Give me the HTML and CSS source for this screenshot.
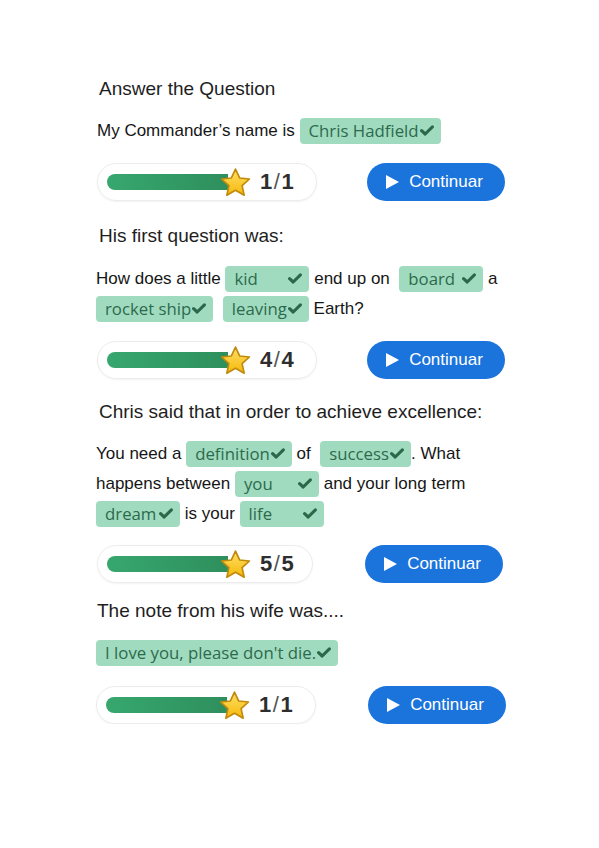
FILE: index.html
```html
<!DOCTYPE html>
<html>
<head>
<meta charset="utf-8">
<link rel="stylesheet" href="styles.css">
</head>
<body>
<svg width="0" height="0" class="defs">
  <defs>
    <symbol id="chk" viewBox="0 0 14 11"><path d="M1.6 5.6 L5.2 9 L12.4 1.8" fill="none" stroke="#2a6848" stroke-width="3.1" stroke-linecap="round" stroke-linejoin="round"/></symbol>
    <linearGradient id="sg" x1="0" y1="0" x2="0" y2="1"><stop offset="0" stop-color="#ffe066"/><stop offset="1" stop-color="#f6b80a"/></linearGradient>
    <symbol id="star" viewBox="0 0 32 30"><polygon points="16,2 20,10.6 29.5,11.6 22.4,18 24.4,27.4 16,22.6 7.6,27.4 9.6,18 2.5,11.6 12,10.6" fill="url(#sg)" stroke="#c08a0c" stroke-width="1.6" stroke-linejoin="round"/></symbol>
    <symbol id="play" viewBox="0 0 15 16"><polygon points="1,1 14,8 1,15" fill="#fff"/></symbol>
  </defs>
</svg>
<main class="page">
  <h2 class="title t1">Answer the Question</h2>
  <p class="para p1">My Commander’s name is <span class="chip">Chris Hadfield<svg class="ck"><use href="#chk"/></svg></span></p>
  <div class="row r1">
    <div class="pill"><div class="bar"></div><svg class="star"><use href="#star"/></svg><span class="frac">1<span class="sl">/</span>1</span></div>
    <button class="btn"><svg class="play"><use href="#play"/></svg>Continuar</button>
  </div>

  <h2 class="title t2">His first question was:</h2>
  <p class="para p2">How does a little <span class="chip mw">kid<svg class="ck"><use href="#chk"/></svg></span> end up on &nbsp;<span class="chip mw">board<svg class="ck"><use href="#chk"/></svg></span> a<br><span class="chip">rocket ship<svg class="ck"><use href="#chk"/></svg></span> &nbsp;<span class="chip">leaving<svg class="ck"><use href="#chk"/></svg></span> Earth?</p>
  <div class="row r2">
    <div class="pill"><div class="bar"></div><svg class="star"><use href="#star"/></svg><span class="frac">4<span class="sl">/</span>4</span></div>
    <button class="btn"><svg class="play"><use href="#play"/></svg>Continuar</button>
  </div>

  <h2 class="title t3">Chris said that in order to achieve excellence:</h2>
  <p class="para p3">You need a <span class="chip">definition<svg class="ck"><use href="#chk"/></svg></span> of &nbsp;<span class="chip">success<svg class="ck"><use href="#chk"/></svg></span>. What<br>happens between <span class="chip mw">you<svg class="ck"><use href="#chk"/></svg></span> and your long term<br><span class="chip mw">dream<svg class="ck"><use href="#chk"/></svg></span> is your <span class="chip mw">life<svg class="ck"><use href="#chk"/></svg></span></p>
  <div class="row r3">
    <div class="pill"><div class="bar"></div><svg class="star"><use href="#star"/></svg><span class="frac">5<span class="sl">/</span>5</span></div>
    <button class="btn"><svg class="play"><use href="#play"/></svg>Continuar</button>
  </div>

  <h2 class="title t4">The note from his wife was....</h2>
  <p class="para p4"><span class="chip">I love you, please don't die.<svg class="ck"><use href="#chk"/></svg></span></p>
  <div class="row r4">
    <div class="pill"><div class="bar"></div><svg class="star"><use href="#star"/></svg><span class="frac">1<span class="sl">/</span>1</span></div>
    <button class="btn"><svg class="play"><use href="#play"/></svg>Continuar</button>
  </div>
</main>
</body>
</html>
```
FILE: styles.css
```css
html, body {
  margin: 0;
  padding: 0;
  background: #fff;
}
.defs {
  position: absolute;
  width: 0;
  height: 0;
}
.page {
  padding: 77px 0 0 96px;
  width: 412px;
  font-family: "Liberation Sans", Arial, sans-serif;
  color: #161616;
}
.title {
  margin: 0;
  padding-left: 3px;
  font-size: 19px;
  line-height: 24px;
  font-weight: normal;
  color: #1e1e1e;
}
.t2 { margin-top: 23px; }
.t3 { margin-top: 21px; }
.t4 { margin-top: 16px; padding-left: 1px; }
.para {
  margin: 15px 0 0;
  font-size: 17px;
  line-height: 30px;
  white-space: nowrap;
}
.p1 { padding-left: 1px; }
.p2 { margin-top: 16px; }
.chip {
  display: inline-flex;
  align-items: center;
  justify-content: space-between;
  box-sizing: border-box;
  height: 26px;
  padding: 0 7px 0 9px;
  border-radius: 4px;
  background: #a0dbc0;
  color: #2d6a4c;
  font-family: "Open Sans", "Noto Sans", sans-serif;
  font-size: 16.8px;
  vertical-align: middle;
  position: relative;
  top: -1px;
}
.chip.mw { min-width: 84px; }
.ck {
  width: 14px;
  height: 11px;
  margin-left: 1px;
  flex: none;
}
.row {
  display: flex;
  align-items: center;
  gap: 50px;
  margin-top: 17px;
}
.r1 { padding-left: 1px; }
.r2 { margin-top: 17px; padding-left: 1px; }
.r3 { margin-top: 16px; padding-left: 1px; gap: 52px; }
.r4 { margin-top: 18px; gap: 52px; }
.pill {
  box-sizing: border-box;
  width: 220px;
  height: 38px;
  border: 1px solid #ececec;
  border-radius: 19px;
  box-shadow: 0 1px 2px rgba(0,0,0,0.05);
  display: flex;
  align-items: center;
  padding-left: 9px;
}
.r3 .pill { width: 216px; }
.bar {
  width: 121px;
  height: 16px;
  border-radius: 8px 0 0 8px;
  background: linear-gradient(90deg, #37a76e, #2e8f5d);
}
.star {
  width: 33px;
  height: 31px;
  margin-left: -9px;
  flex: none;
}
.frac {
  margin-left: 8px;
  font-size: 22px;
  font-weight: bold;
  color: #2e2e2e;
  letter-spacing: 0.5px;
}
.sl {
  font-weight: normal;
  color: #555;
  margin: 0 1px;
}
.btn {
  box-sizing: border-box;
  width: 138px;
  height: 38px;
  border: none;
  border-radius: 19px;
  background: #1b73dc;
  color: #fff;
  font-family: "Liberation Sans", Arial, sans-serif;
  font-size: 17px;
  display: flex;
  align-items: center;
  justify-content: center;
  gap: 9px;
  padding: 0 4px 0 0;
}
.play {
  width: 15px;
  height: 16px;
}
```
